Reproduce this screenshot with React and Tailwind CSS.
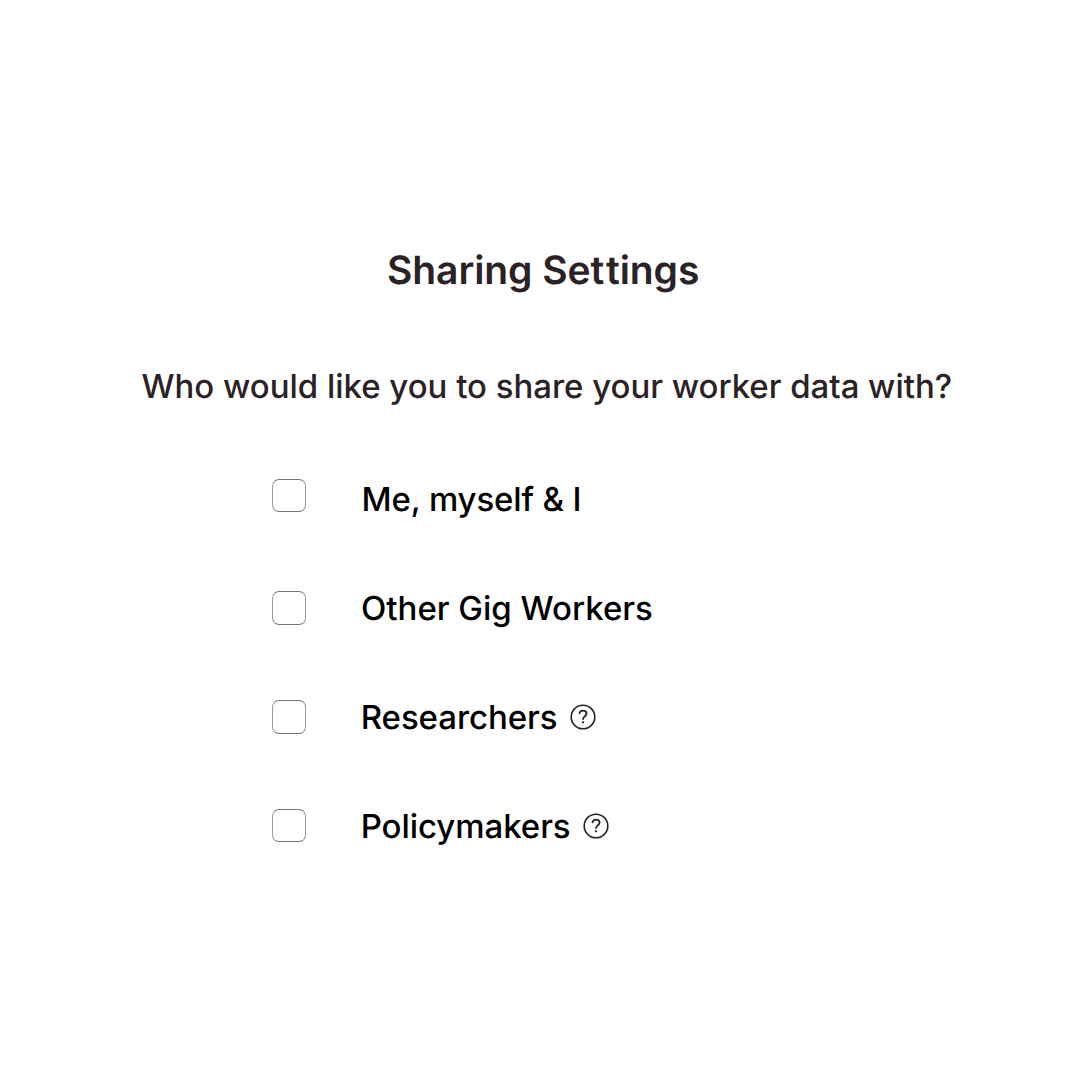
function HelpIcon() {
  return (
    <svg className="h-[26px] w-[26px] shrink-0" viewBox="0 0 26 26" fill="none" stroke="#242428" strokeWidth="1.6" strokeLinecap="round">
      <circle cx="13" cy="13" r="11.8" />
      <path d="M9.5 9.4C9.8 7.6 11.2 6.6 13 6.6c2 0 3.6 1.2 3.6 3 0 2.5-3.5 2.7-3.5 5.4" strokeWidth="1.8" />
      <circle cx="13" cy="18.3" r="1.15" fill="#242428" stroke="none" />
    </svg>
  );
}

function Option({ label, help, box, text, icon }) {
  return (
    <label className="flex h-[109px] items-start">
      <span className={`w-[34px] shrink-0 rounded-[7px] border border-x-[#999] border-y-[#777] bg-white ${box}`} />
      <span className={`text-[33px] leading-[40px] font-medium whitespace-nowrap ${text}`}>{label}</span>
      {help && <span className={`mt-[7px] ${icon}`}><HelpIcon /></span>}
    </label>
  );
}

export default function App() {
  return (
    <main className="h-[1091px] w-[1091px] overflow-hidden bg-white font-['Inter',sans-serif] text-black [text-rendering:geometricPrecision]">
      <h1 className="pt-[247px] pl-[387px] text-[39px] leading-[48px] font-semibold tracking-[-0.08px] whitespace-nowrap text-[#2b2226]">Sharing Se<span className="tracking-[1.8px]">t</span>tings</h1>
      <p className="mt-[71px] pl-[141.5px] text-[32.95px] leading-[40px] font-medium whitespace-nowrap text-[#2b2226]">Who would like you to share your worker data with?</p>
      <div className="mt-[73px] pl-[272px]">
        <Option label="Me, myself & I" box="h-[33px]" text="ml-[55.6px] tracking-[-0.15px]" />
        <Option label="Other Gig Workers" box="mt-[3px] h-[34px]" text="ml-[55px]" />
        <Option label="Researchers" help box="mt-[3px] h-[34px]" text="ml-[54.7px] tracking-[-0.06px]" icon="ml-[12.5px]" />
        <Option label="Policymakers" help box="mt-[3px] h-[33px]" text="ml-[54.7px] tracking-[-0.06px]" icon="ml-[12px]" />
      </div>
    </main>
  );
}
